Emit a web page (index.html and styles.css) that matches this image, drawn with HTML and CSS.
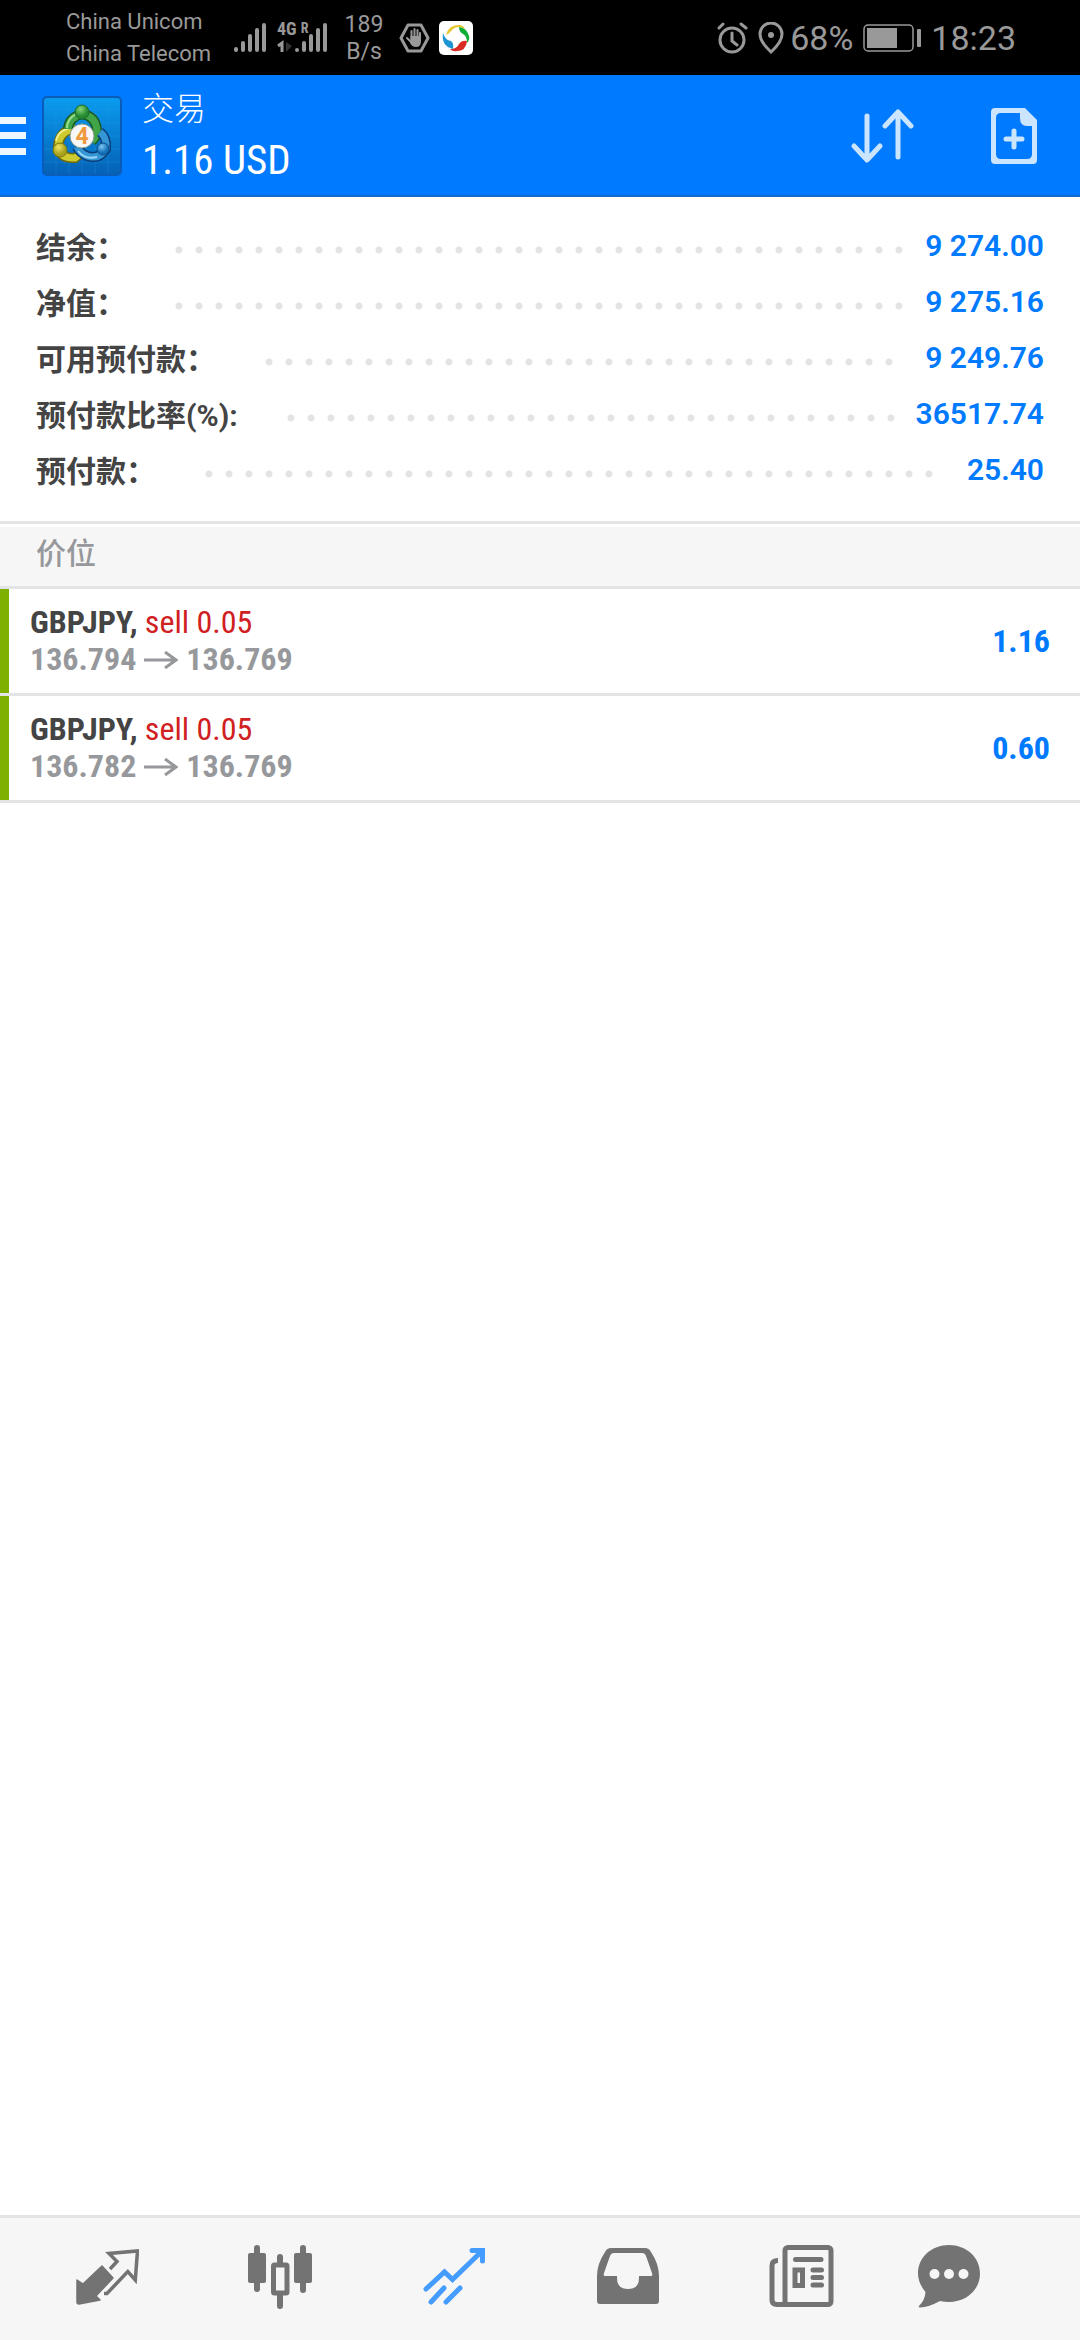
FILE: index.html
```
<!DOCTYPE html>
<html lang="zh-CN">
<head>
    <meta charset="UTF-8">
    <meta name="viewport" content="width=device-width, initial-scale=1.0">
    <title>交易</title>
    <link rel="stylesheet" href="styles.css">
</head>
<body>
    <div class="status-bar">
        <div class="carriers">
            <span>China Unicom</span>
            <span>China Telecom</span>
        </div>
        <svg class="signal" width="34" height="32" viewBox="0 0 34 32" stroke="#999" stroke-width="4" stroke-linecap="round">
            <path d="M3 27v1M10 21v7M17 14v14M24 8v20M31 3v25"/>
        </svg>
        <div class="network">
            <div class="network-type"><span>4G</span><sup>R</sup></div>
            <svg width="52" height="32" viewBox="0 0 52 32" stroke-linecap="round" fill="none">
                <path d="M20 28v0M27 21v7M34 14v14M41 8v20M48 3v25" stroke="#999" stroke-width="4"/>
                <path d="M1 24l4-3v9" stroke="#999" stroke-width="3" stroke-linecap="butt"/>
                <path d="M9 20v10l6-6z" fill="#333"/>
            </svg>
        </div>
        <div class="speed">
            <span>189</span>
            <span>B/s</span>
        </div>
        <svg class="hand" width="31" height="30" viewBox="0 0 31 30">
            <path d="M9 2h13l7 13-7 13H9L2 15z" fill="none" stroke="#999" stroke-width="3" stroke-linejoin="round"/>
            <path d="M12.500 15V8M15.500 15V6M18.500 15V7M21 16V10M8 15l4 4" stroke="#999" stroke-width="2" stroke-linecap="round"/>
            <path d="M11.500 13H22v5q0 6-5 6-4 0-6-4z" fill="#999"/>
        </svg>
        <svg class="pinwheel" width="34" height="34" viewBox="0 0 34 34">
            <rect width="34" height="34" rx="5" fill="#fff"/>
            <path d="M7 14Q10 3 21 4q4 1 5 4-7-4-12 0-3 4-7 6z" fill="#e8c62d"/>
            <path d="M20 6q8 1 10 9 1 4-2 7 0-7-4-9-4-2-4-7z" fill="#0fae35"/>
            <path d="M28 20q-1 10-10 10-4 1-7-2 7 0 9-5 3-4 8-3z" fill="#d92a24"/>
            <path d="M4 12q2 7 8 8 3 2 2 8Q2 25 4 12z" fill="#1c93d2"/>
        </svg>
        <div class="status-right">
            <svg width="31" height="32" viewBox="0 0 31 32" fill="none" stroke="#999" stroke-width="3" stroke-linecap="round">
                <circle cx="15" cy="18" r="12"/>
                <path d="M15 11v8l5 4M2 6l4-4M24 2l5 4"/>
            </svg>
            <svg class="pin" width="26" height="32" viewBox="0 0 26 32">
                <path d="M13 30Q2 20 2 12a11 11 0 0 1 22 0q0 8-11 18z" fill="none" stroke="#999" stroke-width="3"/>
                <circle cx="13" cy="13" r="3" fill="#999"/>
            </svg>
            <span class="battery-level">68%</span>
            <svg class="battery" width="58" height="28" viewBox="0 0 58 28">
                <rect x="1" y="1" width="49" height="26" rx="4" fill="none" stroke="#999" stroke-width="1.500"/>
                <rect x="4" y="4" width="30" height="20" fill="#999"/>
                <rect x="54" y="5" width="4" height="18" rx="1" fill="#999"/>
            </svg>
            <span class="clock">18:23</span>
        </div>
    </div>

    <header class="header">
        <button type="button" class="menu-button" aria-label="Menu">
            <svg width="26" height="38" viewBox="0 0 26 38" fill="#eef6ff">
                <path d="M0 0h26v7H0zM0 15h26v7H0zM0 31h26v7H0z"/>
            </svg>
        </button>
        <svg class="logo" width="80" height="80" viewBox="0 0 80 80">
            <defs>
                <linearGradient id="sky" x1="0" y1="0" x2="0" y2="1">
                    <stop offset="0" stop-color="#0a9cf0"/>
                    <stop offset="1" stop-color="#0561b4"/>
                </linearGradient>
                <radialGradient id="green" cx=".4" cy=".3">
                    <stop offset="0" stop-color="#8ad678"/>
                    <stop offset="1" stop-color="#268a32"/>
                </radialGradient>
                <radialGradient id="yellow" cx=".4" cy=".3">
                    <stop offset="0" stop-color="#f0e560"/>
                    <stop offset="1" stop-color="#a9a21c"/>
                </radialGradient>
                <radialGradient id="blue" cx=".4" cy=".3">
                    <stop offset="0" stop-color="#7cc8f2"/>
                    <stop offset="1" stop-color="#1470b8"/>
                </radialGradient>
            </defs>
            <rect x="1" y="1" width="78" height="78" rx="4" fill="url(#sky)" stroke="#0a5cb8" stroke-width="2"/>
            <path d="M14 2v76M27 2v76M40 2v76M53 2v76M66 2v76M2 14h76M2 27h76M2 40h76M2 53h76M2 66h76" stroke="#2aa4ea" stroke-opacity=".25"/>
            <!-- yellow figure -->
            <path d="M33 33q-15 1-17 17 2 13 17 12l5-4" fill="none" stroke="#6c6b10" stroke-width="10"/>
            <path d="M33 33q-15 1-17 17 2 13 17 12l5-4" fill="none" stroke="#cfca2e" stroke-width="7"/>
            <path d="M31 32q-15 1-17 13" fill="none" stroke="#f3ef8e" stroke-width="2"/>
            <!-- green figure -->
            <path d="M26 33q1-12 14-15 14 2 15 17-1 7-5 10" fill="none" stroke="#1c5a22" stroke-width="10"/>
            <path d="M26 33q1-12 14-15 14 2 15 17-1 7-5 10" fill="none" stroke="#41a548" stroke-width="7"/>
            <path d="M25 32q0-9 9-14" fill="none" stroke="#9be08c" stroke-width="2"/>
            <!-- blue figure -->
            <path d="M58 36q7 5 6 17-7 11-19 7-7-3-10-9" fill="none" stroke="#0a3e78" stroke-width="10"/>
            <path d="M58 36q7 5 6 17-7 11-19 7-7-3-10-9" fill="none" stroke="#3596d6" stroke-width="7"/>
            <path d="M36 55q7 9 19 6" fill="none" stroke="#9bd8f6" stroke-width="2"/>
            <circle cx="40" cy="16" r="7" fill="url(#green)" stroke="#1c6a26"/>
            <circle cx="18" cy="54" r="7" fill="url(#yellow)" stroke="#77740f"/>
            <circle cx="61" cy="53" r="6" fill="url(#blue)" stroke="#0e4f8c"/>
            <circle cx="40" cy="40" r="12" fill="#f7f7f7" stroke="#8a9a8a"/>
            <text class="logo-digit" x="40" y="48" text-anchor="middle">4</text>
        </svg>
        <div class="title">
            <h1>交易</h1>
            <p>1.16 USD</p>
        </div>
        <button type="button" class="sort-button" aria-label="Sort">
            <svg width="64" height="56" viewBox="0 0 64 56" fill="none" stroke="#cce5ff" stroke-width="5" stroke-linecap="round" stroke-linejoin="round">
                <path d="M17 8v43M4 38l13 14 13-14M48 49V5M35 18L48 4l13 14"/>
            </svg>
        </button>
        <button type="button" class="order-button" aria-label="New order">
            <svg width="48" height="58" viewBox="0 0 48 58">
                <path d="M5 1h30l12 12v40q0 4-4 4H5q-4 0-4-4V5q0-4 4-4zM11 6q-5 0-5 5v36q0 5 5 5h26q5 0 5-5V19h-5q-7 0-7-8V6z" fill="#cce5ff" fill-rule="evenodd"/>
                <path d="M24 24v16M16 32h16" stroke="#cce5ff" stroke-width="5" stroke-linecap="round"/>
            </svg>
        </button>
    </header>

    <main class="content">
        <dl class="summary">
            <div class="summary-row">
                <dt>结余：</dt>
                <dd><span class="leader"></span>9 274.00</dd>
            </div>
            <div class="summary-row">
                <dt>净值：</dt>
                <dd><span class="leader"></span>9 275.16</dd>
            </div>
            <div class="summary-row">
                <dt>可用预付款：</dt>
                <dd><span class="leader"></span>9 249.76</dd>
            </div>
            <div class="summary-row">
                <dt>预付款比率(%):</dt>
                <dd><span class="leader"></span>36517.74</dd>
            </div>
            <div class="summary-row">
                <dt>预付款：</dt>
                <dd><span class="leader"></span>25.40</dd>
            </div>
        </dl>

        <h2 class="section-title">价位</h2>

        <ul class="positions">
            <li class="position">
                <div class="position-info">
                    <div><b class="symbol">GBPJPY,</b> <span class="sell">sell 0.05</span></div>
                    <div class="prices">136.794
                        <svg class="arrow" width="34" height="18" viewBox="0 0 34 18"><path d="M0 9h31M21 1l11 8-11 8"/></svg>
                        136.769</div>
                </div>
                <span class="profit">1.16</span>
            </li>
            <li class="position">
                <div class="position-info">
                    <div><b class="symbol">GBPJPY,</b> <span class="sell">sell 0.05</span></div>
                    <div class="prices">136.782
                        <svg class="arrow" width="34" height="18" viewBox="0 0 34 18"><path d="M0 9h31M21 1l11 8-11 8"/></svg>
                        136.769</div>
                </div>
                <span class="profit">0.60</span>
            </li>
        </ul>
    </main>

    <nav class="tab-bar">
        <a href="#quotes" aria-label="Quotes">
            <svg width="64" height="64" viewBox="0 0 64 64">
                <path d="M2 36l6 4 19-18 11 12-17 18 4 4-21 4q-2 0-2-2z" fill="#737373" stroke="#737373" stroke-width="1.500" stroke-linejoin="round"/>
                <path d="M35 25l7-7.500-8-8 28.500-2.500-2.200 29-7.500-8.500L32 49.500h-3" fill="none" stroke="#737373" stroke-width="3.500"/>
            </svg>
        </a>
        <a href="#charts" aria-label="Charts">
            <svg width="66" height="66" viewBox="0 0 66 66">
                <path d="M9 4v41M32 13v9M32 50v12M55 4v42" stroke="#737373" stroke-width="6" stroke-linecap="round"/>
                <rect y="9" width="18" height="30" rx="2" fill="#737373"/>
                <rect x="46" y="9" width="18" height="30" rx="2" fill="#737373"/>
                <rect x="25.500" y="21" width="13.500" height="28" rx="1" fill="#f6f6f6" stroke="#737373" stroke-width="5"/>
            </svg>
        </a>
        <a href="#trade" aria-label="Trade" aria-current="page">
            <svg width="64" height="64" viewBox="0 0 64 64" fill="none" stroke="#449cff" stroke-width="5" stroke-linecap="round">
                <path d="M4 45l18.500-17 8 7.500L60 7M50 6.500h10.500V17M22 44L9 58M38 44L24 58"/>
                <path d="M52 7h8v8z" fill="#449cff" stroke="none"/>
            </svg>
        </a>
        <a href="#history" aria-label="History">
            <svg width="64" height="64" viewBox="0 0 64 64">
                <path d="M15 4h34q4 0 6 4 8 12 8 24v25q0 3-3 3H4q-3 0-3-3V32Q1 20 9 8q2-4 6-4zM18 9q-3 0-4 3L8 29q-1 3 1 3h12v2q0 11 11 11t11-11v-2h12q2 0 1-3l-6-17q-1-3-4-3z" fill="#737373" fill-rule="evenodd"/>
            </svg>
        </a>
        <a href="#news" aria-label="News">
            <svg width="66" height="64" viewBox="0 0 66 64" fill="none" stroke="#737373" stroke-width="5">
                <rect x="16" y="3.500" width="46" height="57" rx="3"/>
                <path d="M9 16.500q-6 0-6 5V56q0 4.500 5 4.500h11"/>
                <path d="M26.500 15.500h25.500M44 26h8.500M44 33.500h8.500M44 41h8.500" stroke-linecap="round"/>
                <rect x="26" y="26" width="7.500" height="15.500"/>
            </svg>
        </a>
        <a href="#messages" aria-label="Messages">
            <svg width="64" height="64" viewBox="0 0 64 64">
                <path d="M32 1c17 0 31 12 31 28.500S49 58 32 58q-5 0-9-1-11 6-20 6.500-2 0-1-1.500 6-6 6.500-14Q1 39 1 29.500C1 13 15 1 32 1z" fill="#737373"/>
                <g fill="#f6f6f6"><circle cx="17.500" cy="30" r="5"/><circle cx="32" cy="30" r="5"/><circle cx="46.500" cy="30" r="5"/></g>
            </svg>
        </a>
    </nav>
</body>
</html>
```

FILE: styles.css
```
* {
    box-sizing: border-box;
}

body {
    margin: 0;
    min-height: 100vh;
    display: flex;
    flex-direction: column;
    background-color: #fff;
    font-family: Roboto, "Noto Sans CJK SC", sans-serif;
}

svg {
    display: block;
    flex-shrink: 0;
}

button {
    padding: 0;
    border: none;
    background: none;
    cursor: pointer;
}

/* Status bar */
.status-bar {
    display: flex;
    align-items: center;
    height: 75px;
    padding: 1px 64px 0 66px;
    background-color: #000;
    color: #999;
}

.carriers {
    display: flex;
    flex-direction: column;
    width: 167px;
    font-size: 22px;
    line-height: 32px;
}

.network {
    margin-left: 10px;
    position: relative;
}

.network-type {
    position: absolute;
    top: -2px;
    left: 0;
    display: flex;
    gap: 4px;
    font-family: "Roboto Condensed", Roboto, sans-serif;
    font-size: 18px;
    font-weight: 700;
    line-height: 18px;
}

.network-type sup {
    font-size: 14px;
    line-height: 16px;
}

.speed {
    display: flex;
    flex-direction: column;
    width: 46px;
    margin-left: 12px;
    font-size: 23px;
    line-height: 27px;
    text-align: center;
}

.hand {
    margin-left: 12px;
}

.pinwheel {
    margin-left: 9px;
}

.status-right {
    display: flex;
    align-items: center;
    margin-left: auto;
    font-size: 34px;
}

.pin {
    margin-left: 10px;
}

.battery-level {
    margin-left: 6px;
}

.battery {
    margin: 0 10px;
}

/* Header */
.header {
    display: flex;
    align-items: center;
    height: 122px;
    padding-top: 2px;
    padding-right: 42px;
    background-color: #007aff;
    border-bottom: 2px solid #1569c7;
    color: #fff;
}

.logo {
    margin-left: 16px;
}

.logo-digit {
    font-size: 23px;
    font-weight: 700;
    fill: #f09a3e;
}

.title {
    flex: 1;
    margin-left: 20px;
}

.title h1 {
    margin: 0;
    font-size: 32px;
    font-weight: 300;
    line-height: 48px;
}

.title p {
    margin: 0;
    font-family: "Roboto Condensed", "Liberation Sans Narrow", Roboto, sans-serif;
    font-size: 41px;
    line-height: 54px;
}

.sort-button {
    margin-right: 76px;
}

/* Account summary */
.content {
    flex: 1;
}

.summary {
    margin: 0;
    padding: 20px 36px 24px;
    border-bottom: 3px solid #e3e4e4;
}

.summary-row {
    display: flex;
    align-items: center;
    height: 56px;
    font-size: 30px;
    font-weight: 700;
}

.summary dt {
    color: #444;
}

.summary dd {
    flex: 1;
    display: flex;
    align-items: center;
    margin: 0 0 0 43px;
    color: #007aff;
    font-weight: 600;
}

.leader {
    flex: 1;
    height: 56px;
    margin-right: 12px;
}

/* only whole dots are drawn */
.leader::before {
    content: "";
    display: block;
    width: round(down, 100%, 20px);
    height: 100%;
    background: radial-gradient(circle at 10px 33px, #e3e4e4 3px, transparent 4px) 0 0 / 20px 56px;
}

.section-title {
    margin: 3px 0 0;
    padding: 0 36px 6px;
    background-color: #f6f6f6;
    border-bottom: 3px solid #e3e4e4;
    color: #96989b;
    font-size: 30px;
    font-weight: 500;
    line-height: 53px;
}

/* Open positions */
.positions {
    margin: 0;
    padding: 0;
    list-style: none;
    font-family: "Roboto Condensed", "Liberation Sans Narrow", Roboto, sans-serif;
    font-size: 32px;
    line-height: 37px;
}

.position {
    display: flex;
    align-items: center;
    height: 107px;
    padding-right: 30px;
    border-bottom: 3px solid #e3e4e4;
}

.position::before {
    content: "";
    align-self: stretch;
    width: 9px;
    margin-right: 21px;
    background-color: #7db000;
}

.position-info {
    flex: 1;
}

.symbol {
    color: #444;
}

.sell {
    color: #d0201f;
}

.prices {
    display: flex;
    align-items: center;
    gap: 8px;
    color: #96989b;
    font-weight: 700;
}

.arrow {
    fill: none;
    stroke: #96989b;
    stroke-width: 3px;
}

.profit {
    color: #007aff;
    font-weight: 700;
}

/* Bottom tabs */
.tab-bar {
    display: grid;
    grid-template-columns: repeat(5, 10fr) 7fr;
    justify-items: center;
    height: 125px;
    padding: 26px 70px 0 20px;
    background-color: #f6f6f6;
    border-top: 3px solid #e3e4e4;
}
```
